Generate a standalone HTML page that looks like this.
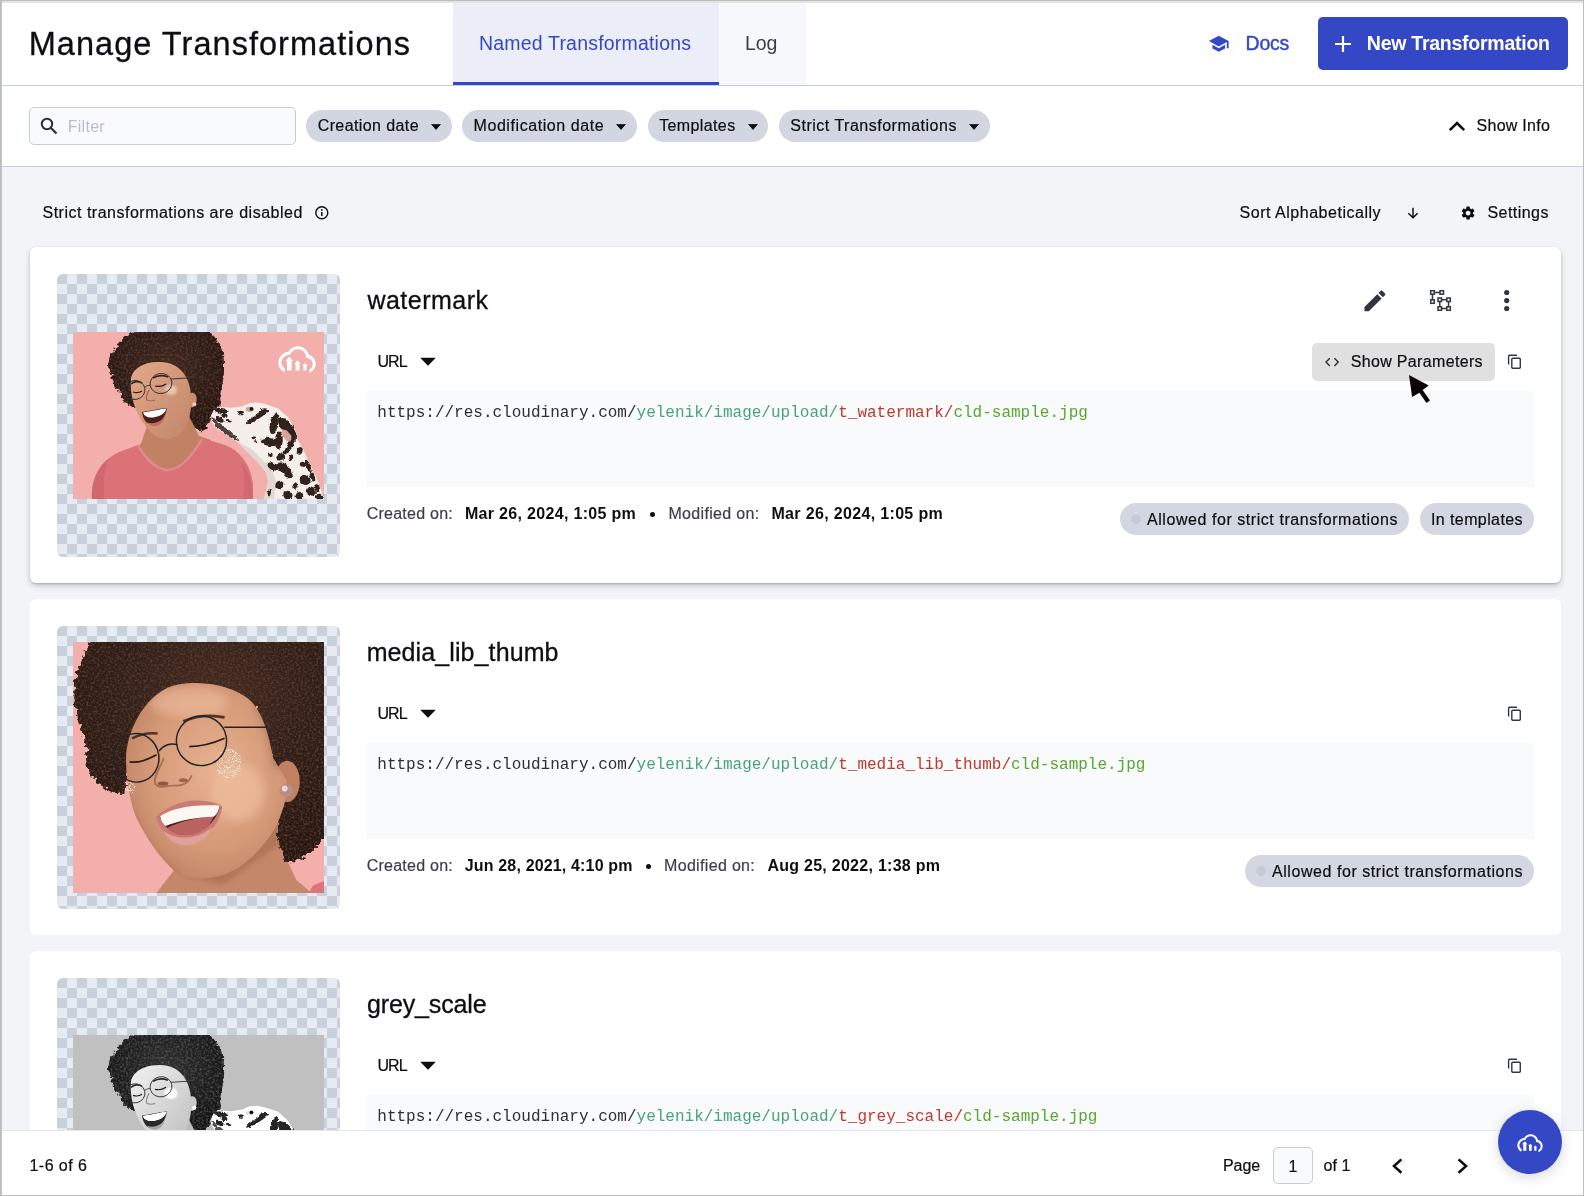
<!DOCTYPE html>
<html lang="en">
<head>
<meta charset="utf-8">
<title>Manage Transformations</title>
<style>
*{box-sizing:border-box;margin:0;padding:0}
html,body{width:1584px;height:1196px;overflow:hidden;background:#fff}
body{font-family:"Liberation Sans",sans-serif;color:#0c0e12;position:relative}
.abs{position:absolute}
.t{position:absolute;white-space:nowrap;line-height:1}
#frame{position:absolute;left:0;top:0;width:1584px;height:1196px;pointer-events:none;z-index:100;box-shadow:inset 1px 1px 0 #bdbdbc,inset -1px -1px 0 #bdbdbd,inset 2px 0 0 #c0c4d2,inset 0 3px 0 #e3e5e3}
#header{position:absolute;left:2px;top:2px;width:1581px;height:84px;background:#fff;border-bottom:1px solid #c4cede}
#filters{position:absolute;left:2px;top:86px;width:1581px;height:81px;background:#fff;border-bottom:1px solid #c4cede}
#main{position:absolute;left:2px;top:167px;width:1581px;height:963px;background:#f2f4f8;overflow:hidden}
#footer{position:absolute;left:2px;top:1130px;width:1581px;height:65px;background:#fff;border-top:1px solid #e4e7ee}
.tab1{position:absolute;left:451px;top:0;width:266px;height:83px;background:#ebedf8;border-bottom:3px solid #3448c5}
.tab2{position:absolute;left:717px;top:0;width:87px;height:83px;background:#f7f8fc}
.chip{position:absolute;top:24px;height:32px;border-radius:16px;background:#d1d6e0}
.card{position:absolute;left:28px;width:1531px;height:336px;background:#fff;border-radius:6px}
.thumb{position:absolute;left:27px;top:27px;width:283px;height:283px;border-radius:6px;overflow:hidden;
 background-color:#e6ebf2;
 background-image:conic-gradient(#e6eaf2 25%,#c8d0dc 0 50%,#e6eaf2 0 75%,#c8d0dc 0);
 background-size:20px 20px}
.code{position:absolute;left:336px;top:144px;width:1168px;height:96px;background:#f9fafc}
.mono{font-family:"Liberation Mono",monospace}
.g{color:#48a37c}.g2{color:#5aa630}.r{color:#c2382c}
.blue{color:#3448c5}.c16{font-size:16px;-webkit-text-stroke:.2px}.h24{font-size:25px;-webkit-text-stroke:.3px #0c0e12}.b{font-weight:bold;-webkit-text-stroke:0}.dim{color:#3a3f4a}
.badge{position:absolute;height:32px;border-radius:16px;background:#d3d7e2}
.dot{width:10px;height:10px;border-radius:50%;background:#c5cad6}
</style>
</head>
<body>
<div id="header">
  <div class="tab1"></div><div class="tab2"></div>
</div>
<div id="filters">
  <div class="abs" id="finput" style="left:27px;top:21px;width:267px;height:38px;border:1px solid #c4cede;border-radius:5px;background:#f9fafc"></div>
  <div class="chip" style="left:304px;width:146px"></div>
  <div class="chip" style="left:460px;width:175px"></div>
  <div class="chip" style="left:646px;width:120px"></div>
  <div class="chip" style="left:777px;width:211px"></div>
</div>
<div id="main">
  <!-- cards are positioned in page coords minus main offset (2,167) -->
  <div class="card" id="card1" style="top:80px;box-shadow:0 3px 7px -1px rgba(0,0,0,.24),0 1px 2px rgba(0,0,0,.16)">
    <div class="thumb"></div>
    <div class="code"></div>
  </div>
  <div class="card" id="card2" style="top:432px">
    <div class="thumb"></div>
    <div class="code"></div>
  </div>
  <div class="card" id="card3" style="top:784px">
    <div class="thumb"></div>
    <div class="code"></div>
  </div>
</div>
<div id="footer"></div>


<!-- PHOTOS -->
<svg class="abs ph" id="ph1" style="left:73px;top:332px" width="251" height="167" viewBox="0 0 251 167">
<defs>
<filter id="curl" x="-10%" y="-10%" width="120%" height="120%" color-interpolation-filters="sRGB"><feTurbulence type="fractalNoise" baseFrequency=".22" numOctaves="2" seed="4" result="n"/><feDisplacementMap in="SourceGraphic" in2="n" scale="7" xChannelSelector="R" yChannelSelector="G" result="d"/><feTurbulence type="fractalNoise" baseFrequency=".45" numOctaves="2" seed="9" result="t"/><feColorMatrix in="t" type="matrix" values="0 0 0 0 .40  0 0 0 0 .26  0 0 0 0 .2  0 0 0 2.2 -.95" result="tk"/><feComposite in="tk" in2="d" operator="in" result="tx"/><feMerge><feMergeNode in="d"/><feMergeNode in="tx"/></feMerge></filter>
<filter id="rough" x="-20%" y="-20%" width="140%" height="140%"><feTurbulence type="fractalNoise" baseFrequency=".3" numOctaves="2" seed="11" result="n"/><feDisplacementMap in="SourceGraphic" in2="n" scale="3.500" xChannelSelector="R" yChannelSelector="G"/></filter><filter id="soft"><feGaussianBlur stdDeviation="1.2"/></filter>
<filter id="soft3"><feGaussianBlur stdDeviation="3"/></filter>
<radialGradient id="hairg" cx=".5" cy=".35" r=".7"><stop offset="0" stop-color="#3f2820"/><stop offset=".55" stop-color="#2d1c17"/><stop offset="1" stop-color="#231512"/></radialGradient>
<linearGradient id="sking" x1="0" y1="0" x2="1" y2="1"><stop offset="0" stop-color="#e2a987"/><stop offset="1" stop-color="#c2856a"/></linearGradient>
<g id="p1body">
<!-- hair -->
<path filter="url(#curl)" fill="url(#hairg)" d="M35 33C37 18 50 5 66-4L130-4C146 4 152 20 151 36 152 50 145 60 148 71 142 76 138 84 136 92 132 100 124 101 120 96L108 98 62 76C50 72 40 52 35 33z"/>
<!-- neck -->
<path fill="#c08263" d="M74 94 68 112 58 118 70 140 100 146 128 124 138 108 126 104 116 84z"/>
<!-- face -->
<path fill="url(#sking)" d="M58 46C60 36 72 30 84 30 97 29 108 35 113 45 117 52 118 60 118 66 119 78 116 94 106 103 97 110 84 108 76 98 66 88 56 68 58 46z"/>
<path fill="#c98c6c" d="M116 62c6-4 9 3 7 9-2 5-5 6-7 2z"/>
<circle cx="121.300" cy="72.300" r="2" fill="#e3cfc6"/>
<!-- glitter -->
<ellipse cx="98" cy="58" rx="6" ry="5" fill="#f1d9c9" opacity=".7" filter="url(#soft)"/>
<!-- mouth -->
<path fill="#4a1f1c" d="M69 80C78 79 88 76 94 76 92 90 82 94 76 92 72 90 70 86 69 80z"/>
<path fill="#fff" d="M70 80.500C78 79.500 88 76.800 93.500 76.500 92 82 86 84.500 80 85.500 75 86 71 84 70 80.500z"/>
<path fill="#c66a66" d="M74 90C80 93 88 90 92 84 90 94 80 98 74 90z"/>
<!-- nose / eyes -->
<path d="M76 58c-2 4-4 8-2 10 2 1 6 1 8 0" fill="none" stroke="#9a6248" stroke-width="1.200"/>
<path d="M60 60c3 1 6 1 9-1M82 54c4 1 8 0 11-2" fill="none" stroke="#2a1812" stroke-width="1.200"/>
<path d="M58 52c3-3 8-3 11-1M80 46c5-3 10-3 15-1" fill="none" stroke="#3a231b" stroke-width="1.600"/>
<!-- glasses -->
<g fill="none" stroke="#26323a" stroke-width=".900"><ellipse cx="62" cy="58" rx="10" ry="9.500" transform="rotate(-12 62 58)"/><ellipse cx="88" cy="51.500" rx="11" ry="10" transform="rotate(-12 88 51.500)"/><path d="M72 55c2-1.500 3.500-2 5-1.500M98 47 114 46"/></g>
<!-- sweater -->
<path fill="#db7278" d="M19 167C18 146 26 130 46 120L65 113C72 124 82 136 95 136 108 136 121 120 129 106L152 113C170 120 178 136 180 152L180 167z"/>
<path fill="none" stroke="#e28a8c" stroke-width="2.500" d="M65 114C72 125 82 138 95 138 108 138 121 121 129 107"/>
<path fill="#c95d66" opacity=".5" d="M19 167C18 150 24 136 36 126 30 140 30 156 32 167zM180 167c0-12-3-26-12-38 4 12 4 26 2 38z"/>
<!-- dog -->
<path fill="#f4efeb" d="M138.8 82.1 140.8 77.8 145.4 74.7 157.4 75.7 168.4 74.4 176.7 70.9 184 70.4 191.4 71.8 205.2 76.4 215.3 85.6 222.7 98.5 224.5 107.7 230 116.9 236.5 130.7 242.9 144.5 248.4 158.3 252.1 168.4 190.5 168.4 195.1 150 193.2 140.8 185.9 131.6 174.8 120.6 163.8 109.5 152.8 102.6 141.7 94.8 138 87.4z"/>
<path fill="#d9cfc8" opacity=".7" d="M163.8 109.5 174.8 120.6 185.9 131.6 193.2 140.8 195.1 150 190.5 168.4 200.6 168.4 203.4 150 199.7 139 191.4 129.8 178.5 116.9z"/>
<g fill="#33211d" filter="url(#rough)">
<path d="M205.2 85.6 212.6 86.5 219 93 223.1 101.2 222.7 109.5 218.1 116.9 212.6 122.4 209.8 121.5 214.4 113.2 217.6 105.8 213.5 101.2 208 96.6 205.2 91.1z"/>
<ellipse cx="148.2" cy="78.5" rx="7.4" ry="2.5" transform="rotate(8 148.2 78.5)"/>
<ellipse cx="167.9" cy="81" rx="3.2" ry="2.3"/>
<ellipse cx="155.7" cy="88.8" rx="3.0" ry="1.6" transform="rotate(15 155.7 88.8)"/>
<ellipse cx="151.4" cy="83.3" rx="3.2" ry="2.3" transform="rotate(20 151.4 83.3)"/>
<ellipse cx="146.8" cy="87.9" rx="4.1" ry="2.3" transform="rotate(25 146.8 87.9)"/>
<ellipse cx="184" cy="85.1" rx="12.9" ry="2.3" transform="rotate(-32 184 85.1)"/>
<ellipse cx="190.5" cy="79.2" rx="4.6" ry="2.8" transform="rotate(-10 190.5 79.2)"/>
<ellipse cx="201.1" cy="91.6" rx="4.1" ry="10.6" transform="rotate(12 201.1 91.6)"/>
<ellipse cx="196.9" cy="110" rx="9.2" ry="4.1" transform="rotate(8 196.9 110)"/>
<ellipse cx="206.1" cy="108.1" rx="3.7" ry="8.7"/>
<ellipse cx="207.7" cy="124.9" rx="4.4" ry="3.4" transform="rotate(-10 207.7 124.9)"/>
<ellipse cx="197.4" cy="122.9" rx="2.3" ry="2.3"/>
<ellipse cx="226.8" cy="118.9" rx="2.8" ry="3.9" transform="rotate(20 226.8 118.9)"/>
<ellipse cx="218.2" cy="125.4" rx="1.9" ry="3.0" transform="rotate(10 218.2 125.4)"/>
<ellipse cx="200.1" cy="134.4" rx="6.0" ry="3.7" transform="rotate(25 200.1 134.4)"/>
<ellipse cx="210.7" cy="136.2" rx="7.4" ry="4.6" transform="rotate(35 210.7 136.2)"/>
<ellipse cx="214.9" cy="141.7" rx="5.1" ry="4.6" transform="rotate(40 214.9 141.7)"/>
<ellipse cx="232.1" cy="147.9" rx="5.7" ry="4.8" transform="rotate(25 232.1 147.9)"/>
<ellipse cx="229.6" cy="132.3" rx="2.8" ry="2.5" transform="rotate(20 229.6 132.3)"/>
<ellipse cx="235.1" cy="133.9" rx="2.3" ry="6.9" transform="rotate(-25 235.1 133.9)"/>
<ellipse cx="239.5" cy="144.9" rx="2.1" ry="5.1" transform="rotate(-22 239.5 144.9)"/>
<ellipse cx="206.3" cy="153.2" rx="3.9" ry="4.6" transform="rotate(30 206.3 153.2)"/>
<ellipse cx="214.9" cy="163.1" rx="4.6" ry="4.4" transform="rotate(30 214.9 163.1)"/>
<ellipse cx="196.2" cy="160.6" rx="1.6" ry="3.7" transform="rotate(10 196.2 160.6)"/>
<ellipse cx="237.9" cy="159.2" rx="5.1" ry="4.6" transform="rotate(30 237.9 159.2)"/>
<ellipse cx="244.3" cy="155.5" rx="2.3" ry="4.6" transform="rotate(-20 244.3 155.5)"/>
<ellipse cx="246.8" cy="164.9" rx="3.9" ry="3.0" transform="rotate(10 246.8 164.9)"/>
<ellipse cx="222.2" cy="153.7" rx="2.3" ry="3.7" transform="rotate(30 222.2 153.7)"/>
<ellipse cx="226.4" cy="163.8" rx="3.7" ry="3.7" transform="rotate(20 226.4 163.8)"/>
<ellipse cx="180.4" cy="105.8" rx="1.8" ry="1.4"/>
<ellipse cx="182.2" cy="109.3" rx="1.4" ry="1.1"/>
<path d="M138 85.6 142.6 94.3 153.7 102.2 165.6 109.5 163.8 105.8 154.6 97.6 145.4 91.1 140.8 85.6z" opacity=".85"/>
</g>
<path fill="#d9a39c" d="M208.4 97.1 213.9 98.5 218.5 104 217.6 109.5 213.5 109.1 209.8 104z"/>
<ellipse cx="176.7" cy="77.3" rx="4" ry="2.600" fill="#c9a092"/><circle cx="178.5" cy="76.9" r="1.900" fill="#1c1210"/>
</g>
</g>
</defs>
<rect width="251" height="167" fill="#f2afab"/>
<use href="#p1body"/>
<!-- cloud watermark -->
<g id="cloudw" transform="translate(205 14)" fill="#fff"><g id="cloudp" fill="#fff"><path d="M30.800 8.800C29.700 3.900 25.200.2 19.900.2 15.900.2 12.300 2.400 10.400 5.800 4.800 6.300.4 11.100.4 16.800c0 3.400 1.600 6.500 4.200 8.500l.2.100h1.900v-3.100C5 21 3.400 19 3.400 16.800c0-4.400 3.600-8.100 8-8.100h.8l.4-.9c1.300-2.800 4.200-4.600 7.300-4.600 4.200 0 7.700 3.200 8.100 7.400l.1 1.200 1.200.1c3.100.4 5.400 3 5.400 6.100 0 2.300-1.300 4.400-3.300 5.500v3.200l.7-.300c3.300-1.500 5.600-4.800 5.600-8.400 0-4.500-3-8.100-6.900-9.200z"/><path d="M9 24.500V15H7.300l4-4.300 4 4.300h-1.700v9.500zM17.500 24.500V17.800h-1.300l3.300-3.500 3.300 3.500h-1.300v6.700zM25.300 24.500v-4.600h-1.100l2.700-2.900 2.700 2.900h-1.100v4.600z"/></g></g>
</svg>
<svg class="abs ph" id="ph2" style="left:73px;top:642px" width="251" height="251" viewBox="0 0 251 251">
<defs>
<filter id="curl2" x="-10%" y="-10%" width="120%" height="120%" color-interpolation-filters="sRGB"><feTurbulence type="fractalNoise" baseFrequency=".06" numOctaves="2" seed="7" result="n"/><feDisplacementMap in="SourceGraphic" in2="n" scale="40" xChannelSelector="R" yChannelSelector="G" result="d"/><feTurbulence type="fractalNoise" baseFrequency=".11" numOctaves="2" seed="3" result="t"/><feColorMatrix in="t" type="matrix" values="0 0 0 0 .40  0 0 0 0 .26  0 0 0 0 .2  0 0 0 2.2 -.95" result="tk"/><feComposite in="tk" in2="d" operator="in" result="tx"/><feMerge><feMergeNode in="d"/><feMergeNode in="tx"/></feMerge></filter>
<filter id="b8"><feGaussianBlur stdDeviation="8"/></filter>
<filter id="b20"><feGaussianBlur stdDeviation="20"/></filter>
<filter id="spk" color-interpolation-filters="sRGB"><feTurbulence type="fractalNoise" baseFrequency=".35" numOctaves="1" seed="5" result="n"/><feColorMatrix in="n" type="matrix" values="0 0 0 0 1  0 0 0 0 .96  0 0 0 0 .92  0 0 0 6 -3.1" result="s"/><feComposite in="s" in2="SourceGraphic" operator="in"/></filter>
<radialGradient id="hairg2" cx=".55" cy=".25" r=".8"><stop offset="0" stop-color="#432b22"/><stop offset=".5" stop-color="#2f1e18"/><stop offset="1" stop-color="#241612"/></radialGradient>
<radialGradient id="faceg" cx=".55" cy=".45" r=".65"><stop offset="0" stop-color="#e8b291"/><stop offset=".6" stop-color="#d59a78"/><stop offset="1" stop-color="#bd8062"/></radialGradient>
<clipPath id="facec"><path d="M470 270C540 240 680 240 780 300 850 340 880 430 905 560L960 650C960 720 950 760 940 780 920 860 840 960 760 1010 700 1050 600 1070 520 1040 450 990 380 880 350 820 320 760 300 660 300 560 300 480 350 330 470 270z"/></clipPath>
</defs>
<rect width="251" height="251" fill="#f2afab"/>
<g transform="scale(.2433) translate(-82 -82)">
<!-- neck -->
<path fill="#c4876a" d="M420 1120 520 990 900 740 965 985 1000 1060 1070 1120z"/>
<path fill="#a56a4e" opacity=".6" filter="url(#b8)" d="M520 1040 760 1010 940 800 950 900 700 1080z"/>
<path fill="#e0747c" d="M1045 1120 1070 1082 1120 1062 1120 1120z"/>
<!-- hair -->
<path filter="url(#curl2)" fill="url(#hairg2)" d="M170 60C120 140 80 220 88 300 84 400 150 480 135 560 140 640 200 690 290 712L320 560 400 330 600 260 830 340 900 560 930 640 925 800 925 900 955 990C1040 985 1100 900 1140 860L1140 60z"/>
<!-- ear -->
<ellipse cx="962" cy="655" rx="52" ry="85" fill="#c08062"/>
<!-- face -->
<path fill="url(#faceg)" d="M470 270C540 240 680 240 780 300 850 340 880 430 905 560L960 650C960 720 950 760 940 780 920 860 840 960 760 1010 700 1050 600 1070 520 1040 450 990 380 880 350 820 320 760 300 660 300 560 300 480 350 330 470 270z"/>
<g clip-path="url(#facec)">
<ellipse cx="760" cy="700" rx="110" ry="120" fill="#efbe9f" opacity=".7" filter="url(#b20)"/>
<ellipse cx="560" cy="330" rx="160" ry="60" fill="#efbe9f" opacity=".6" filter="url(#b20)"/>
<path d="M300 700C340 860 450 1000 540 1050L300 1100z" fill="#9c6046" opacity=".5" filter="url(#b20)"/>
<path d="M830 340C880 430 900 520 905 600L980 600 900 300z" fill="#8a5440" opacity=".5" filter="url(#b20)"/>
</g>
<!-- earring -->
<circle cx="958" cy="692" r="27" fill="#b98c84"/><circle cx="952" cy="684" r="12" fill="#ecd8d2"/>
<!-- nose -->
<path d="M455 560C440 600 410 640 420 665 440 690 470 670 500 672 530 676 560 660 570 630" fill="none" stroke="#9a5f46" stroke-width="7" opacity=".8"/>
<ellipse cx="452" cy="664" rx="22" ry="9" fill="#6b3a2c" opacity=".7"/><ellipse cx="535" cy="650" rx="18" ry="8" fill="#6b3a2c" opacity=".6"/>
<!-- eyes/brows -->
<path d="M315 575C350 580 390 565 425 545M560 512C610 512 660 498 705 478" fill="none" stroke="#2a1712" stroke-width="7"/>
<path d="M325 478C360 460 400 455 430 458M535 408C590 385 650 380 705 392" fill="none" stroke="#3a231b" stroke-width="11" opacity=".85"/>
<!-- glitter -->
<ellipse cx="722" cy="582" rx="55" ry="60" fill="#fff" filter="url(#spk)"/>
<ellipse cx="316" cy="680" rx="22" ry="26" fill="#fff" filter="url(#spk)"/>
<!-- mouth -->
<path fill="#c97a74" d="M422 800C470 760 540 725 610 735 650 738 680 745 695 758 690 820 640 885 560 905 500 915 450 880 422 800z"/>
<path fill="#4a201e" d="M438 800C480 775 560 755 685 758 675 810 630 860 560 875 500 880 460 850 438 800z"/>
<path fill="#b9625e" d="M470 845C520 820 600 800 660 800 640 850 600 872 555 876 510 878 485 865 470 845z"/>
<path fill="#fbf7f2" d="M440 798C480 770 560 748 684 754 680 780 672 792 660 800 600 800 520 815 462 838 450 828 444 815 440 798z"/>
<path fill="#e2a09a" d="M455 858C500 900 600 895 655 840 640 890 590 915 545 918 505 918 470 895 455 858z"/>
<!-- glasses -->
<g fill="none" stroke="#23232a" stroke-width="6"><ellipse cx="342" cy="558" rx="93" ry="100" transform="rotate(-10 342 558)"/><ellipse cx="610" cy="488" rx="103" ry="102" transform="rotate(-10 610 488)"/><path d="M436 530C455 505 485 495 512 505M704 432 880 432"/></g>
</g>
</svg>
<svg class="abs ph" id="ph3" style="left:73px;top:1035px" width="251" height="168" viewBox="0 0 251 167" preserveAspectRatio="none"><rect width="251" height="167" fill="#c0c0c0"/><use href="#p1body" style="filter:grayscale(1) brightness(1.28) contrast(1.12)"/></svg>
<!-- /PHOTOS -->
<!-- ===== ICON LAYER ===== -->
<!-- header -->
<svg class="abs" style="left:1208.400px;top:33.300px" width="21.500" height="21.500" viewBox="0 0 24 24"><path fill="#3448c5" d="M5 13.18v4L12 21l7-3.820v-4L12 17l-7-3.820zM12 3 1 9l11 6 9-4.910V17h2V9L12 3z"/></svg>
<div class="abs" id="btn" style="left:1318px;top:17px;width:250px;height:53px;border-radius:5px;background:#3448c5"></div>
<svg class="abs" style="left:1334px;top:35px" width="18" height="18" viewBox="0 0 18 18"><path stroke="#fff" stroke-width="2.2" fill="none" d="M9 1v16M1 9h16"/></svg>
<!-- filter -->
<svg class="abs" style="left:39px;top:116px" width="20" height="20" viewBox="0 0 20 20"><circle cx="8" cy="8" r="5.2" fill="none" stroke="#2b2f38" stroke-width="2"/><path d="M12 12l5.500 5.500" stroke="#2b2f38" stroke-width="2.200" fill="none"/></svg>
<svg class="abs caret" style="left:430.500px;top:123.500px" width="10" height="6" viewBox="0 0 10 6"><path d="M.6.400h8.800L5 5.400z" fill="#0c0e12" stroke="#0c0e12" stroke-width=".800" stroke-linejoin="round"/></svg>
<svg class="abs caret" style="left:616px;top:123.500px" width="10" height="6" viewBox="0 0 10 6"><path d="M.6.400h8.800L5 5.400z" fill="#0c0e12" stroke="#0c0e12" stroke-width=".800" stroke-linejoin="round"/></svg>
<svg class="abs caret" style="left:747.500px;top:123.500px" width="10" height="6" viewBox="0 0 10 6"><path d="M.6.400h8.800L5 5.400z" fill="#0c0e12" stroke="#0c0e12" stroke-width=".800" stroke-linejoin="round"/></svg>
<svg class="abs caret" style="left:968.500px;top:123.500px" width="10" height="6" viewBox="0 0 10 6"><path d="M.6.400h8.800L5 5.400z" fill="#0c0e12" stroke="#0c0e12" stroke-width=".800" stroke-linejoin="round"/></svg>
<svg class="abs" style="left:1447px;top:119px" width="20" height="14" viewBox="0 0 20 14"><path d="M2.800 11.200 10 4l7.200 7.200" fill="none" stroke="#0c0e12" stroke-width="2.600"/></svg>
<!-- info row -->
<svg class="abs" style="left:314px;top:205px" width="16" height="16" viewBox="0 0 16 16"><circle cx="7.800" cy="7.800" r="6" fill="none" stroke="#0c0e12" stroke-width="1.400"/><path d="M7.800 7v4" stroke="#0c0e12" stroke-width="1.500"/><circle cx="7.800" cy="4.900" r=".900" fill="#0c0e12"/></svg>
<svg class="abs" style="left:1406px;top:206px" width="14" height="14" viewBox="0 0 14 14"><path d="M7 1.700v9.800M2.400 7.200 7 11.800l4.600-4.600" fill="none" stroke="#0c0e12" stroke-width="1.500"/></svg>
<svg class="abs" style="left:1459.750px;top:205.050px" width="16.200" height="16.200" viewBox="0 0 24 24"><path fill="#0c0e12" d="M19.140 12.940c.04-.3.060-.61.060-.94 0-.32-.02-.64-.07-.94l2.030-1.580a.49.49 0 0 0 .12-.61l-1.920-3.320a.488.488 0 0 0-.59-.22l-2.390.96c-.5-.38-1.030-.7-1.620-.94l-.36-2.540a.484.484 0 0 0-.48-.41h-3.840c-.24 0-.43.170-.47.410l-.36 2.540c-.59.240-1.130.570-1.620.940l-2.390-.960c-.22-.08-.47 0-.59.220L2.740 8.870c-.12.210-.08.470.12.610l2.030 1.580c-.05.300-.09.630-.09.940s.02.640.07.940l-2.030 1.580a.49.49 0 0 0-.12.610l1.920 3.320c.12.220.37.290.59.220l2.390-.96c.5.380 1.030.700 1.620.940l.36 2.540c.05.240.24.410.48.410h3.840c.24 0 .44-.17.470-.41l.36-2.540c.59-.24 1.130-.56 1.620-.94l2.390.96c.22.080.47 0 .59-.22l1.920-3.320c.12-.22.070-.47-.12-.61l-2.010-1.580zM12 15.600c-1.980 0-3.600-1.620-3.600-3.600s1.620-3.600 3.600-3.600 3.600 1.620 3.600 3.600-1.620 3.600-3.600 3.600z"/></svg>

<!-- card1 icons -->
<svg class="abs" style="left:1360.900px;top:287.200px" width="27.800" height="27.800" viewBox="0 0 24 24"><path fill="#2f3542" d="M3 17.250V21h3.750L17.810 9.940l-3.750-3.750L3 17.250zM20.710 7.040c.39-.39.39-1.020 0-1.410l-2.340-2.340c-.39-.39-1.020-.39-1.410 0l-1.830 1.830 3.750 3.750 1.830-1.830z"/></svg>
<svg class="abs" style="left:1429px;top:289px" width="23" height="23" viewBox="-1 -1 23 23"><g fill="none" stroke="#2f3542" stroke-width="1.500"><rect x=".700" y=".700" width="3.500" height="3.500"/><rect x="10" y=".700" width="3.500" height="3.500"/><rect x=".700" y="9.800" width="3.500" height="3.500"/><rect x="8" y="8" width="3.500" height="3.500"/><rect x="16.800" y="8" width="3.500" height="3.500"/><rect x="8" y="16.800" width="3.500" height="3.500"/><rect x="16.800" y="16.800" width="3.500" height="3.500"/><path d="M4.200 2.450H10M2.450 4.200v5.600M11.500 9.750h5.300M11.500 18.550h5.300M9.750 11.500v5.300M18.550 11.500v5.300"/></g></svg>
<svg class="abs" style="left:1502px;top:288px" width="10" height="25" viewBox="0 0 10 25"><g fill="#2f3542"><circle cx="4.700" cy="4.500" r="2.600"/><circle cx="4.700" cy="12.600" r="2.600"/><circle cx="4.700" cy="20.500" r="2.600"/></g></svg>
<div class="abs" id="spbtn" style="left:1312px;top:343px;width:183px;height:38px;border-radius:5px;background:#e0e0e0"></div>
<svg class="abs" style="left:1324px;top:356px" width="16" height="12" viewBox="0 0 16 12"><path d="M5.800 2.300 2 6.100l3.800 3.800M10.400 2.300l3.800 3.800-3.800 3.800" fill="none" stroke="#2b2f38" stroke-width="1.400"/></svg>
<svg class="abs copy" style="left:1506px;top:353px" width="17" height="18" viewBox="0 0 17 18"><g fill="none" stroke="#2f3542" stroke-width="1.400"><path d="M2.600 11.500V3.200a1 1 0 0 1 1-1H11"/><rect x="5.800" y="5.300" width="8.500" height="10" rx="1"/></g></svg>
<svg class="abs copy" style="left:1506px;top:705px" width="17" height="18" viewBox="0 0 17 18"><g fill="none" stroke="#2f3542" stroke-width="1.400"><path d="M2.600 11.500V3.200a1 1 0 0 1 1-1H11"/><rect x="5.800" y="5.300" width="8.500" height="10" rx="1"/></g></svg>
<svg class="abs copy" style="left:1506px;top:1057px" width="17" height="18" viewBox="0 0 17 18"><g fill="none" stroke="#2f3542" stroke-width="1.400"><path d="M2.600 11.500V3.200a1 1 0 0 1 1-1H11"/><rect x="5.800" y="5.300" width="8.500" height="10" rx="1"/></g></svg>
<!-- URL carets -->
<svg class="abs" style="left:419px;top:357px" width="18" height="10" viewBox="0 0 18 10"><path d="M1.200.800h15.600L9 8.800z" fill="#0c0e12"/></svg>
<svg class="abs" style="left:419px;top:709px" width="18" height="10" viewBox="0 0 18 10"><path d="M1.200.800h15.600L9 8.800z" fill="#0c0e12"/></svg>
<svg class="abs" style="left:419px;top:1061px" width="18" height="10" viewBox="0 0 18 10"><path d="M1.200.800h15.600L9 8.800z" fill="#0c0e12"/></svg>
<!-- badges -->
<div class="badge" style="left:1120px;top:503px;width:289px"></div><div class="abs dot" style="left:1131px;top:514px"></div>
<div class="badge" style="left:1420px;top:503px;width:114px"></div>
<div class="badge" style="left:1245px;top:855px;width:289px"></div><div class="abs dot" style="left:1256px;top:866px"></div>
<!-- bullets -->
<div class="abs" style="left:650.200px;top:512px;width:5px;height:5px;border-radius:50%;background:#0c0e12"></div>
<div class="abs" style="left:645.700px;top:864px;width:5px;height:5px;border-radius:50%;background:#0c0e12"></div>

<!-- ===== TEXT LAYER (page coords) ===== -->
<div id="textlayer" style="position:absolute;left:0;top:0;width:1584px;height:1196px;will-change:transform">
<span class="t" id="title" style="left:28.7px;top:28px;font-size:32.5px;letter-spacing:1.04px;-webkit-text-stroke:.3px #0c0e12">Manage Transformations</span>
<span class="t blue" id="tabNamed" style="left:478.9px;top:34px;font-size:19.5px;letter-spacing:0.2px">Named Transformations</span>
<span class="t" id="tabLog" style="left:745.1px;top:34px;font-size:19.5px;letter-spacing:-.2px;color:#3a3f4a">Log</span>
<span class="t blue med" id="docs" style="left:1245.5px;top:34px;font-size:19.5px;letter-spacing:-.2px;-webkit-text-stroke:.4px #3448c5">Docs</span>
<span class="t" id="newT" style="left:1366.8px;top:34px;font-size:19.5px;letter-spacing:-.25px;font-weight:bold;color:#fff">New Transformation</span>

<span class="t" id="fph" style="left:67.7px;top:119px;font-size:16px;color:#b3bfd1;letter-spacing:0.28px">Filter</span>
<span class="t c16" id="chip1" style="left:317.7px;top:118.3px;letter-spacing:0.4px">Creation date</span>
<span class="t c16" id="chip2" style="left:473.5px;top:118.3px;letter-spacing:0.576px">Modification date</span>
<span class="t c16" id="chip3" style="left:659.2px;top:118.3px;letter-spacing:0.38px">Templates</span>
<span class="t c16" id="chip4" style="left:790.3px;top:118.3px;letter-spacing:0.5px">Strict Transformations</span>
<span class="t c16" id="showInfo" style="left:1476.5px;top:118.2px;letter-spacing:0.28px">Show Info</span>

<span class="t c16" id="strictDis" style="left:42.5px;top:204.8px;letter-spacing:0.5px">Strict transformations are disabled</span>
<span class="t c16" id="sortA" style="left:1239.6px;top:204.8px;letter-spacing:0.52px">Sort Alphabetically</span>
<span class="t c16" id="settings" style="left:1487.5px;top:204.8px;letter-spacing:0.45px">Settings</span>

<!-- card 1 -->
<span class="t h24" id="c1title" style="left:367.4px;top:287.5px;letter-spacing:0.5px">watermark</span>
<span class="t c16" id="c1url" style="left:377.4px;top:354.3px;letter-spacing:-0.85px">URL</span>
<span class="t mono" id="c1code" style="left:377.3px;top:405.3px;font-size:16px;color:#2b2f38">https://res.cloudinary.com/<span class="g">yelenik/image/upload/</span><span class="r">t_watermark/</span><span class="g2">cld-sample.jpg</span></span>
<span class="t c16 dim" id="c1cr" style="left:366.7px;top:506.4px;letter-spacing:0.25px">Created on:</span>
<span class="t c16 b" id="c1d1" style="left:464.9px;top:506.4px;letter-spacing:0.32px">Mar 26, 2024, 1:05 pm</span>
<span class="t c16 dim" id="c1mo" style="left:668.4px;top:506.4px;letter-spacing:0.33px">Modified on:</span>
<span class="t c16 b" id="c1d2" style="left:771.4px;top:506.4px;letter-spacing:0.34px">Mar 26, 2024, 1:05 pm</span>
<span class="t c16" id="c1sp" style="left:1350.7px;top:354.3px;letter-spacing:0.34px">Show Parameters</span>
<span class="t c16" id="c1b1" style="left:1147px;top:512.3px;letter-spacing:0.556px">Allowed for strict transformations</span>
<span class="t c16" id="c1b2" style="left:1431px;top:512.3px;letter-spacing:0.4px">In templates</span>

<!-- card 2 -->
<span class="t h24" id="c2title" style="left:366.7px;top:639.5px;letter-spacing:0.1px">media_lib_thumb</span>
<span class="t c16" id="c2url" style="left:377.4px;top:706.3px;letter-spacing:-0.85px">URL</span>
<span class="t mono" id="c2code" style="left:377.3px;top:757.3px;font-size:16px;color:#2b2f38">https://res.cloudinary.com/<span class="g">yelenik/image/upload/</span><span class="r">t_media_lib_thumb/</span><span class="g2">cld-sample.jpg</span></span>
<span class="t c16 dim" id="c2cr" style="left:366.7px;top:858.4px;letter-spacing:0.25px">Created on:</span>
<span class="t c16 b" id="c2d1" style="left:464.8px;top:858.4px;letter-spacing:0.157px">Jun 28, 2021, 4:10 pm</span>
<span class="t c16 dim" id="c2mo" style="left:664px;top:858.4px;letter-spacing:0.33px">Modified on:</span>
<span class="t c16 b" id="c2d2" style="left:767.4px;top:858.4px;letter-spacing:0.27px">Aug 25, 2022, 1:38 pm</span>
<span class="t c16" id="c2b1" style="left:1272px;top:864.3px;letter-spacing:0.556px">Allowed for strict transformations</span>

<!-- card 3 -->
<span class="t h24" id="c3title" style="left:367px;top:991.5px;letter-spacing:-0.15px">grey_scale</span>
<span class="t c16" id="c3url" style="left:377.4px;top:1058.3px;letter-spacing:-0.85px">URL</span>
<span class="t mono" id="c3code" style="left:377.3px;top:1109.3px;font-size:16px;color:#2b2f38">https://res.cloudinary.com/<span class="g">yelenik/image/upload/</span><span class="r">t_grey_scale/</span><span class="g2">cld-sample.jpg</span></span>

<div id="footcover" class="abs" style="left:2px;top:1130px;width:1581px;height:65px;background:#fff;border-top:1px solid #e4e7ee"></div>
<span class="t c16" id="f1" style="left:29.5px;top:1157.5px;letter-spacing:0.45px">1-6 of 6</span>
<span class="t c16" id="fPage" style="left:1222.9px;top:1158.2px">Page</span>
<div class="abs" id="fbox" style="left:1273px;top:1147px;width:40px;height:37px;border:1px solid #c4cede;border-radius:5px;background:#f9fafc"></div>
<span class="t c16" id="fOne" style="left:1288.5px;top:1158.5px">1</span>
<span class="t c16" id="fOf" style="left:1323.6px;top:1158.2px">of 1</span>


<svg class="abs" style="left:1389px;top:1156px" width="16" height="20" viewBox="0 0 16 20"><path d="M12.400 3.400 5 10.100l7.400 6.700" fill="none" stroke="#0c0e12" stroke-width="2.600"/></svg>
<svg class="abs" style="left:1455px;top:1156px" width="16" height="20" viewBox="0 0 16 20"><path d="M3.600 3.400 11 10.100l-7.400 6.700" fill="none" stroke="#0c0e12" stroke-width="2.600"/></svg>
<div class="abs" id="fab" style="left:1498px;top:1110px;width:64px;height:64px;border-radius:50%;background:#3448c5;box-shadow:0 3px 14px rgba(0,0,0,.16)"></div>
<svg class="abs" style="left:1517.300px;top:1133.800px" width="26" height="18" viewBox="0 0 38 26.500"><use href="#cloudp"/></svg>
<!-- cursor -->
<svg class="abs" style="left:1405px;top:371px;z-index:50" width="30" height="36" viewBox="1405 371 30 36"><path d="M1409 375 1428.700 385.500 1422.650 390 1430 400.400 1426.400 403 1419.450 392.800 1412.100 397z" fill="#0a0606"/></svg>
</div>
<div id="frame"></div>
</body>
</html>
